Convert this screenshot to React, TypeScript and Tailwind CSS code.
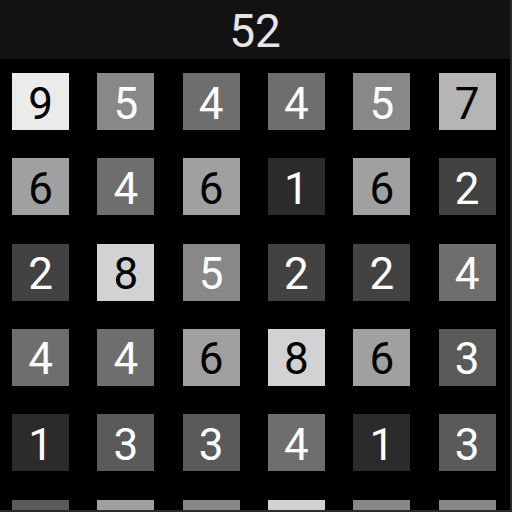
import React from "react";

const rows: number[][] = [
  [9, 5, 4, 4, 5, 7],
  [6, 4, 6, 1, 6, 2],
  [2, 8, 5, 2, 2, 4],
  [4, 4, 6, 8, 6, 3],
  [1, 3, 3, 4, 1, 3],
  [3, 6, 5, 8, 5, 5],
];

const tileClass: Record<number, string> = {
  1: "bg-[#2b2b2b] text-white",
  2: "bg-[#424242] text-white",
  3: "bg-[#5a5a5a] text-white",
  4: "bg-[#6e6e6e] text-white",
  5: "bg-[#888888] text-white",
  6: "bg-[#a0a0a0] text-black",
  7: "bg-[#b5b5b5] text-black",
  8: "bg-[#d2d2d2] text-black",
  9: "bg-[#ebebeb] text-black",
};

export default function App() {
  return (
    <div className="relative w-[512px] h-[512px] bg-[#2a2a2a] overflow-hidden" style={{ fontFamily: "Roboto, 'Noto Sans', sans-serif" }}>
      <div className="w-[510px] h-[510px] bg-black overflow-hidden flex flex-col">
        <div className="h-[59px] shrink-0 bg-[#121212] flex items-center justify-center text-[46px] leading-none text-[#e6e6e6] pt-[2px]">
          52
        </div>
        <div className="grid grid-cols-[repeat(6,57px)] auto-rows-[57px] gap-x-[28.33px] gap-y-[28.33px] pl-[12px] pt-[14px]">
          {rows.flat().map((v, i) => (
            <div
              key={i}
              className={`${tileClass[v]} flex items-center justify-center text-[44px] leading-none pt-[4px]`}
            >
              {v}
            </div>
          ))}
        </div>
      </div>
    </div>
  );
}
